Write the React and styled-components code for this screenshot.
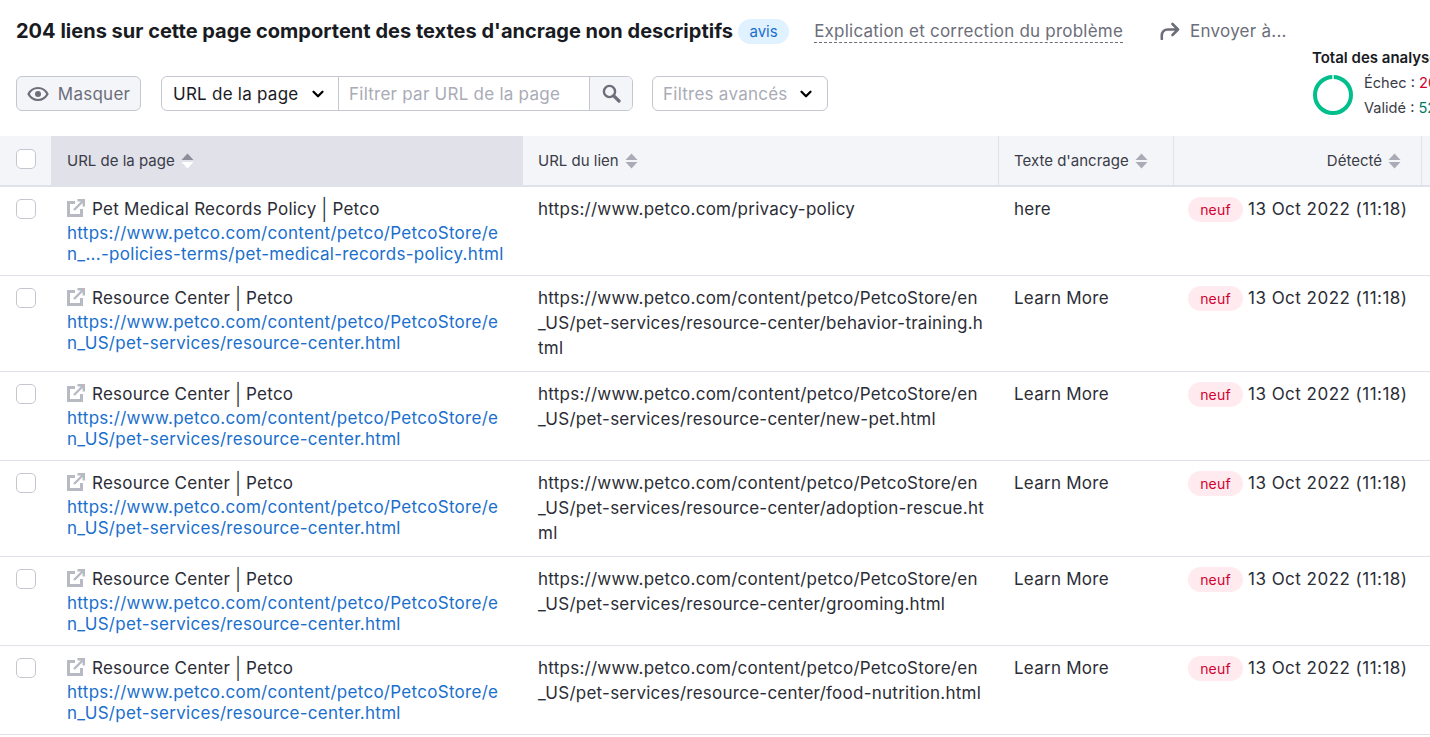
import React from "react";
import styled, { createGlobalStyle } from "styled-components";
import { ChevronDown } from "lucide-react";

const GlobalStyle = createGlobalStyle`
  html, body {
    margin: 0;
    padding: 0;
    overflow: hidden;
    background: #fff;
  }
  body {
    font-family: Inter, "Liberation Sans", sans-serif;
    color: #191b23;
  }
`;

const Page = styled.div`
  width: 1430px;
  height: 737px;
  overflow: hidden;
`;

const TopBar = styled.div`
  height: 62px;
  display: flex;
  align-items: center;
  padding-left: 16px;
  white-space: nowrap;
`;

const Title = styled.h1`
  margin: 0;
  font-size: 20px;
  line-height: 28px;
  font-weight: 700;
  letter-spacing: 0.01px;
`;

const Notice = styled.span`
  margin-left: 5px;
  height: 25px;
  padding: 0 11.5px;
  border-radius: 13px;
  background: #e0f1ff;
  color: #1a6fcc;
  font-size: 15px;
  line-height: 25px;
`;

const HelpLink = styled.a`
  margin-left: 25px;
  color: #6c6e79;
  font-size: 17px;
  letter-spacing: 0.22px;
  line-height: 22px;
  border-bottom: 1px dashed #6c6e79;
`;

const SendAction = styled.div`
  margin-left: 37px;
  display: flex;
  align-items: center;
  gap: 10px;
  color: #6c6e79;
  font-size: 17px;
  letter-spacing: 0.25px;
`;

const Toolbar = styled.div`
  height: 74px;
  box-sizing: border-box;
  display: flex;
  align-items: flex-start;
  padding: 14px 0 0 16px;
  position: relative;
`;

const MaskButton = styled.button`
  width: 125px;
  height: 35px;
  padding: 0;
  display: flex;
  align-items: center;
  justify-content: center;
  gap: 9px;
  border: 1px solid #c4c7cf;
  border-radius: 6px;
  background: #f4f5f9;
  color: #6c6e79;
  font: inherit;
  font-size: 17px;
  letter-spacing: 0.25px;
`;

const FilterGroup = styled.div`
  margin-left: 20px;
  height: 35px;
  display: flex;
  border: 1px solid #c4c7cf;
  border-radius: 6px;
  box-sizing: border-box;
  overflow: hidden;
  font-size: 17px;
  letter-spacing: 0.25px;
`;

const Select = styled.div`
  width: 177px;
  box-sizing: border-box;
  padding: 0 11px;
  display: flex;
  align-items: center;
  justify-content: space-between;
  border-right: 1px solid #c4c7cf;
  white-space: nowrap;
`;

const FilterInput = styled.div`
  width: 250px;
  box-sizing: border-box;
  padding-left: 10px;
  display: flex;
  align-items: center;
  color: #a9abb6;
  white-space: nowrap;
`;

const SearchButton = styled.div`
  width: 42px;
  display: flex;
  align-items: center;
  justify-content: center;
  border-left: 1px solid #c4c7cf;
  background: #f4f5f9;
`;

const AdvancedFilters = styled.div`
  margin-left: 19px;
  width: 176px;
  height: 35px;
  box-sizing: border-box;
  padding: 0 12px 0 10px;
  display: flex;
  align-items: center;
  justify-content: space-between;
  border: 1px solid #c4c7cf;
  border-radius: 6px;
  color: #a9abb6;
  font-size: 17px;
  letter-spacing: 0.25px;
  white-space: nowrap;
`;

const Totals = styled.div`
  position: absolute;
  left: 1312px;
  top: -14px;
  width: 200px;
`;

const TotalsTitle = styled.div`
  font-size: 15px;
  line-height: 20px;
  font-weight: 600;
  white-space: nowrap;
`;

const TotalsBody = styled.div`
  display: flex;
  align-items: center;
  gap: 11px;
  margin: 1px 0 0 1px;
`;

const TotalsLines = styled.div`
  margin-top: 2px;
  font-size: 14.6px;
  line-height: 25px;
  color: #3a3c47;
  white-space: nowrap;
`;

const Count = styled.span`
  color: ${(p) => p.$color};
`;

const TableRow = styled.div`
  display: grid;
  grid-template-columns: 51px 472px 476px 175px 248px 8px;
  border-bottom: 1px solid #e0e1e9;
  font-size: 17px;
  letter-spacing: 0.25px;
  color: #2b2d36;
`;

const HeadRow = styled(TableRow)`
  height: 49px;
  background: #f4f5f9;
  border-bottom: 2px solid #e0e1e9;
  font-size: 15px;
  letter-spacing: 0;
`;

const HeadCell = styled.div`
  display: flex;
  align-items: center;
  justify-content: ${(p) => (p.$right ? "flex-end" : "flex-start")};
  gap: 6px;
  box-sizing: border-box;
  padding: ${(p) => (p.$right ? "0 20px 0 0" : p.$active ? "0 0 0 16px" : "0 0 0 15px")};
  background: ${(p) => (p.$active ? "#e0e1e9" : "transparent")};
  border-right: ${(p) => (p.$divider ? "1px solid #e0e1e9" : "0")};
  color: #3a3c47;
`;

const CheckCell = styled.div`
  padding: ${(p) => (p.$head ? "13px 0 0 16px" : "12px 0 0 16px")};
`;

const Checkbox = styled.div`
  width: 20px;
  height: 20px;
  box-sizing: border-box;
  border: 1px solid #c4c7cf;
  border-radius: 5px;
  background: #fff;
`;

const Cell = styled.div`
  padding: 10px 14px 10px 15px;
  line-height: 25px;
  word-break: break-all;
  min-width: 0;
`;

const PageCell = styled(Cell)`
  padding: 10px 15px 11px 16px;
`;

const PageName = styled.div`
  display: flex;
  align-items: center;
  gap: 7px;
  height: 25px;
  margin-bottom: 1px;
  white-space: nowrap;

  svg {
    margin-bottom: 4px;
  }
`;

const Separator = styled.span`
  display: inline-block;
  margin: 0 -0.5px;
  font-size: 21px;
  font-weight: 300;
  line-height: 25px;
  vertical-align: top;
`;

const PageLink = styled.a`
  display: block;
  line-height: 20.5px;
  letter-spacing: 0.29px;
  color: #1a6fcc;
`;

const DateCell = styled.div`
  padding: 10px 0 0 14px;
  display: flex;
  align-items: flex-start;
  gap: 5px;
  line-height: 25px;
  white-space: nowrap;
  letter-spacing: 0.48px;
`;

const NewBadge = styled.span`
  width: 55px;
  height: 25px;
  border-radius: 13px;
  background: #ffebef;
  color: #d1002f;
  font-size: 14px;
  letter-spacing: 0.2px;
  line-height: 25px;
  text-align: center;
`;

const EyeIcon = () => (
  <svg width="22" height="16" viewBox="0 0 22 16" fill="none">
    <path
      d="M1.5 8C3.6 4 7 2 11 2s7.4 2 9.5 6c-2.1 4-5.5 6-9.5 6S3.6 12 1.5 8Z"
      stroke="#6c6e79"
      strokeWidth="2.2"
      strokeLinejoin="round"
    />
    <circle cx="11" cy="8" r="3" fill="#6c6e79" />
  </svg>
);

const SearchIcon = () => (
  <svg width="19" height="19" viewBox="0 0 19 19" fill="none">
    <circle cx="7.5" cy="7.5" r="5.6" stroke="#6c6e79" strokeWidth="2.4" />
    <path d="M11.8 11.8 17 17" stroke="#6c6e79" strokeWidth="3.2" strokeLinecap="round" />
  </svg>
);

const Arrow = () => (
  <svg width="20" height="18" viewBox="0 0 20 18" fill="none">
    <path
      d="M1.8 17v-3.5c0-3.6 2.4-6 6-6H17.5M12.5 2l5.5 5.5-5.5 5.5"
      stroke="#6c6e79"
      strokeWidth="2.6"
      strokeLinecap="round"
      strokeLinejoin="round"
    />
  </svg>
);

const Ring = () => (
  <svg width="40" height="40" viewBox="0 0 40 40">
    <circle cx="20" cy="20" r="18" fill="none" stroke="#00bf8c" strokeWidth="4" />
    <path d="M20 0v4" stroke="#fff" strokeWidth="1.4" />
  </svg>
);

const SortIcon = ({ up = "#a9abb6", down = "#a9abb6" }) => (
  <svg width="13" height="16" viewBox="0 0 13 16">
    <path d="M6.5 0.5 12.5 7H0.5Z" fill={up} />
    <path d="M6.5 15.5 12.5 9H0.5Z" fill={down} />
  </svg>
);

const ExternalIcon = () => (
  <svg width="18" height="18" viewBox="0 0 18 18" fill="none">
    <path d="M8 3.5H1.5v13h13V10" stroke="#b8bac3" strokeWidth="3" />
    <path d="M7 11l9-9M10.5 1.2h6.3v6.3" stroke="#b8bac3" strokeWidth="2.4" />
  </svg>
);

const PETCO_BASE = "https://www.petco.com/content/petco/PetcoStore/en_US/pet-services/resource-center";

const rows = [
  {
    title: "Pet Medical Records Policy",
    page: "https://www.petco.com/content/petco/PetcoStore/e\u200Bn_...-policies-terms/pet-medical-records-policy.html",
    link: "https://www.petco.com/privacy-policy",
    anchor: "here",
  },
  {
    title: "Resource Center",
    page: PETCO_BASE.replace("/en_US", "/e\u200Bn_US") + ".html",
    link: PETCO_BASE + "/behavior-training.html",
    anchor: "Learn More",
  },
  {
    title: "Resource Center",
    page: PETCO_BASE.replace("/en_US", "/e\u200Bn_US") + ".html",
    link: PETCO_BASE + "/new-pet.html",
    anchor: "Learn More",
  },
  {
    title: "Resource Center",
    page: PETCO_BASE.replace("/en_US", "/e\u200Bn_US") + ".html",
    link: PETCO_BASE + "/adoption-rescue.html",
    anchor: "Learn More",
  },
  {
    title: "Resource Center",
    page: PETCO_BASE.replace("/en_US", "/e\u200Bn_US") + ".html",
    link: PETCO_BASE + "/grooming.html",
    anchor: "Learn More",
  },
  {
    title: "Resource Center",
    page: PETCO_BASE.replace("/en_US", "/e\u200Bn_US") + ".html",
    link: PETCO_BASE + "/food-nutrition.html",
    anchor: "Learn More",
  },
];

export default function App() {
  return (
    <Page>
      <GlobalStyle />
      <TopBar>
        <Title>204 liens sur cette page comportent des textes d'ancrage non descriptifs</Title>
        <Notice>avis</Notice>
        <HelpLink>Explication et correction du problème</HelpLink>
        <SendAction>
          <Arrow />
          Envoyer à...
        </SendAction>
      </TopBar>

      <Toolbar>
        <MaskButton>
          <EyeIcon />
          Masquer
        </MaskButton>
        <FilterGroup>
          <Select>
            URL de la page
            <ChevronDown size={18} strokeWidth={3} color="#000" />
          </Select>
          <FilterInput>Filtrer par URL de la page</FilterInput>
          <SearchButton>
            <SearchIcon />
          </SearchButton>
        </FilterGroup>
        <AdvancedFilters>
          Filtres avancés
          <ChevronDown size={18} strokeWidth={3} color="#000" />
        </AdvancedFilters>
        <Totals>
          <TotalsTitle>Total des analyses</TotalsTitle>
          <TotalsBody>
            <Ring />
            <TotalsLines>
              <div>
                Échec : <Count $color="#d1002f">204</Count>
              </div>
              <div>
                Validé : <Count $color="#007c65">5210</Count>
              </div>
            </TotalsLines>
          </TotalsBody>
        </Totals>
      </Toolbar>

      <HeadRow>
        <CheckCell $head>
          <Checkbox />
        </CheckCell>
        <HeadCell $active>
          URL de la page
          <SortIcon up="#8b8d98" down="#fff" />
        </HeadCell>
        <HeadCell $divider>
          URL du lien
          <SortIcon />
        </HeadCell>
        <HeadCell $divider>
          Texte d'ancrage
          <SortIcon />
        </HeadCell>
        <HeadCell $right $divider>
          Détecté
          <SortIcon />
        </HeadCell>
        <div />
      </HeadRow>

      {rows.map((row, index) => (
        <TableRow key={index}>
          <CheckCell>
            <Checkbox />
          </CheckCell>
          <PageCell>
            <PageName>
              <ExternalIcon />
              <span>
                {row.title} <Separator>|</Separator> Petco
              </span>
            </PageName>
            <PageLink>{row.page}</PageLink>
          </PageCell>
          <Cell>{row.link}</Cell>
          <Cell>{row.anchor}</Cell>
          <DateCell>
            <NewBadge>neuf</NewBadge>
            13 Oct 2022 (11:18)
          </DateCell>
          <div />
        </TableRow>
      ))}
    </Page>
  );
}
